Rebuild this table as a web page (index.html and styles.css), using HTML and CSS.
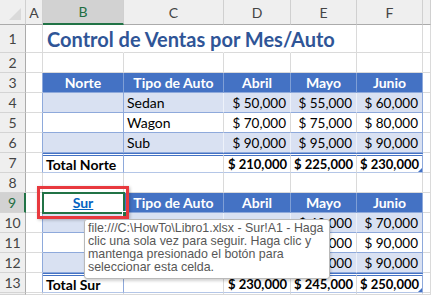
FILE: index.html
```html
<!DOCTYPE html>
<html lang="es">
<head>
<meta charset="utf-8">
<title>Control de Ventas</title>
<link rel="stylesheet" href="styles.css">
</head>
<body>
<div class="sheet">
  <!-- column headers -->
  <div class="corner"><span class="tri"></span></div>
  <div class="ch">A</div>
  <div class="ch sel">B</div>
  <div class="ch">C</div>
  <div class="ch">D</div>
  <div class="ch">E</div>
  <div class="ch">F</div>
  <div class="ch"></div>

  <!-- row 1 -->
  <div class="rn">1</div>
  <div class="c"></div>
  <div class="c title-cell"><span class="title">Control de Ventas por Mes/Auto</span></div>
  <div class="c nob"></div>
  <div class="c nob"></div>
  <div class="c"></div>
  <div class="c"></div>
  <div class="c"></div>

  <!-- row 2 -->
  <div class="rn">2</div>
  <div class="c"></div>
  <div class="c"></div>
  <div class="c"></div>
  <div class="c"></div>
  <div class="c"></div>
  <div class="c"></div>
  <div class="c"></div>

  <!-- row 3 -->
  <div class="rn">3</div>
  <div class="c tl"></div>
  <div class="c th">Norte</div>
  <div class="c th">Tipo de Auto</div>
  <div class="c th">Abril</div>
  <div class="c th">Mayo</div>
  <div class="c th last">Junio</div>
  <div class="c"></div>

  <!-- row 4 -->
  <div class="rn">4</div>
  <div class="c tl"></div>
  <div class="c band bcol"></div>
  <div class="c band txt">Sedan</div>
  <div class="c band num">$ 50,000</div>
  <div class="c band num">$ 55,000</div>
  <div class="c band num last">$ 60,000</div>
  <div class="c"></div>

  <!-- row 5 -->
  <div class="rn">5</div>
  <div class="c tl"></div>
  <div class="c plain bcol"></div>
  <div class="c plain txt">Wagon</div>
  <div class="c plain num">$ 70,000</div>
  <div class="c plain num">$ 75,000</div>
  <div class="c plain num last">$ 80,000</div>
  <div class="c"></div>

  <!-- row 6 -->
  <div class="rn">6</div>
  <div class="c tl"></div>
  <div class="c band bcol"></div>
  <div class="c band txt">Sub</div>
  <div class="c band num">$ 90,000</div>
  <div class="c band num">$ 95,000</div>
  <div class="c band num last">$ 90,000</div>
  <div class="c"></div>

  <!-- row 7 -->
  <div class="rn">7</div>
  <div class="c tl"></div>
  <div class="c tot txt bcol">Total Norte</div>
  <div class="c tot"></div>
  <div class="c tot num">$ 210,000</div>
  <div class="c tot num">$ 225,000</div>
  <div class="c tot num last handle">$ 230,000</div>
  <div class="c"></div>

  <!-- row 8 -->
  <div class="rn">8</div>
  <div class="c"></div>
  <div class="c"></div>
  <div class="c"></div>
  <div class="c"></div>
  <div class="c"></div>
  <div class="c"></div>
  <div class="c"></div>

  <!-- row 9 -->
  <div class="rn rsel">9</div>
  <div class="c tl"></div>
  <div class="c active"><a class="link" href="#">Sur</a></div>
  <div class="c th">Tipo de Auto</div>
  <div class="c th">Abril</div>
  <div class="c th">Mayo</div>
  <div class="c th last">Junio</div>
  <div class="c"></div>

  <!-- row 10 -->
  <div class="rn">10</div>
  <div class="c tl"></div>
  <div class="c band bcol"></div>
  <div class="c band txt"></div>
  <div class="c band num"></div>
  <div class="c band num">$ 60,000</div>
  <div class="c band num last">$ 70,000</div>
  <div class="c"></div>

  <!-- row 11 -->
  <div class="rn">11</div>
  <div class="c tl"></div>
  <div class="c plain bcol"></div>
  <div class="c plain txt"></div>
  <div class="c plain num"></div>
  <div class="c plain num">$ 80,000</div>
  <div class="c plain num last">$ 90,000</div>
  <div class="c"></div>

  <!-- row 12 -->
  <div class="rn">12</div>
  <div class="c tl"></div>
  <div class="c band bcol"></div>
  <div class="c band txt"></div>
  <div class="c band num"></div>
  <div class="c band num">$ 95,000</div>
  <div class="c band num last">$ 90,000</div>
  <div class="c"></div>

  <!-- row 13 -->
  <div class="rn">13</div>
  <div class="c tl"></div>
  <div class="c tot txt bcol">Total Sur</div>
  <div class="c tot"></div>
  <div class="c tot num">$ 230,000</div>
  <div class="c tot num">$ 245,000</div>
  <div class="c tot num last handle">$ 250,000</div>
  <div class="c"></div>

  <!-- row 14 -->
  <div class="rn"></div>
  <div class="c"></div>
  <div class="c"></div>
  <div class="c"></div>
  <div class="c"></div>
  <div class="c"></div>
  <div class="c"></div>
  <div class="c"></div>

  <div class="selbox"><span class="fill"></span></div>
  <div class="annot"></div>
  <div class="tooltip">file:///C:\HowTo\Libro1.xlsx - Sur!A1 - Haga clic una sola vez para seguir. Haga clic y mantenga presionado el botón para seleccionar esta celda.</div>
</div>
</body>
</html>
```
FILE: styles.css
```css
* { box-sizing: border-box; }
html, body {
  margin: 0;
  padding: 0;
  width: 431px;
  height: 295px;
  overflow: hidden;
  background: #ffffff;
}
.sheet {
  position: relative;
  display: grid;
  grid-template-columns: 26px 17px 81px 100px 67px 66px 66px 8px;
  grid-template-rows: 25px 28px repeat(12, 20px) 2px;
  font-family: Lato, "Liberation Sans", sans-serif;
  font-size: 14px;
  color: #000;
  overflow: hidden;
  height: 295px;
}
.corner {
  position: relative;
  background: #efefef;
  border-right: 1px solid #d0d0d0;
  border-bottom: 1px solid #ababab;
}
.tri {
  position: absolute;
  right: 4px;
  bottom: 4px;
  width: 0;
  height: 0;
  border-left: 12px solid transparent;
  border-bottom: 12px solid #dadada;
}
.ch {
  background: #efefef;
  border-right: 1px solid #d0d0d0;
  border-bottom: 1px solid #ababab;
  color: #444;
  font-size: 14px;
  display: flex;
  align-items: center;
  justify-content: center;
}
.ch.sel {
  background: #d2d2d2;
  color: #1e6e42;
  border-bottom: 2px solid #217346;
}
.rn {
  background: #efefef;
  border-right: 1px solid #ababab;
  border-bottom: 1px solid #d4d4d4;
  color: #444;
  font-size: 14px;
  display: flex;
  align-items: center;
  justify-content: center;
}
.rn.rsel {
  background: #d2d2d2;
  color: #1e6e42;
  border-right: 2px solid #217346;
}
.c {
  border-right: 1px solid #dadada;
  border-bottom: 1px solid #dadada;
  display: flex;
  align-items: center;
  white-space: nowrap;
  min-width: 0;
}
.c.nob { border-right-color: transparent; }
.title-cell { overflow: visible; border-right-color: transparent; }
.title {
  font-weight: 700;
  font-size: 20px;
  color: #2f5597;
  padding-left: 4px;
}
.c.tl { border-right-color: #8ea9db; }
.th {
  background: #4472c4;
  color: #fff;
  font-weight: 700;
  justify-content: center;
  border-right: 1px solid #7f9fd6;
  border-bottom: 1px solid #8ea9db;
}
.band {
  background: #d9e1f2;
  border-bottom: 1px solid #8ea9db;
  border-right: 1px solid #eef2fa;
}
.plain {
  background: #fff;
  border-bottom: 1px solid #8ea9db;
  border-right: 1px solid #dadada;
}
.bcol { border-right-color: #8ea9db; }
.c.last { border-right-color: #8ea9db; }
.txt { padding-left: 3px; }
.num { justify-content: flex-end; padding-right: 4px; font-size: 13.5px; }
.tot {
  font-weight: 700;
  border-top: 3px double #4472c4;
  border-bottom: 1px solid #b4c6e7;
}
.tot.num { font-size: 13px; padding-right: 3px; }
.handle { position: relative; }
.handle::after {
  content: "";
  position: absolute;
  right: 0;
  bottom: 0;
  width: 0;
  height: 0;
  border-left: 4px solid transparent;
  border-bottom: 4px solid #4472c4;
}
.active {
  justify-content: center;
  background: #fff;
  border-bottom: 1px solid #8ea9db;
}
.link {
  color: #0563c1;
  font-weight: 700;
  text-decoration: underline;
}
.selbox {
  position: absolute;
  left: 42px;
  top: 192px;
  width: 83px;
  height: 22px;
  border: 2px solid #217346;
  pointer-events: none;
}
.fill {
  position: absolute;
  right: -5px;
  bottom: -5px;
  width: 6px;
  height: 6px;
  background: #217346;
  border: 1px solid #fff;
}
.annot {
  position: absolute;
  left: 37px;
  top: 186px;
  width: 92px;
  height: 33px;
  border: 3px solid #e8393e;
  box-shadow: 1px 1px 3px rgba(0, 0, 0, 0.25);
}
.tooltip {
  position: absolute;
  left: 84px;
  top: 219px;
  width: 246px;
  height: 60px;
  background: #fff;
  border: 1px solid #b9b9b9;
  border-radius: 3px;
  box-shadow: 1px 2px 3px rgba(0, 0, 0, 0.18);
  color: #575757;
  font-family: "Liberation Sans", Arial, sans-serif;
  font-size: 12.4px;
  line-height: 13px;
  padding: 2px 3px 2px 3px;
}
```
